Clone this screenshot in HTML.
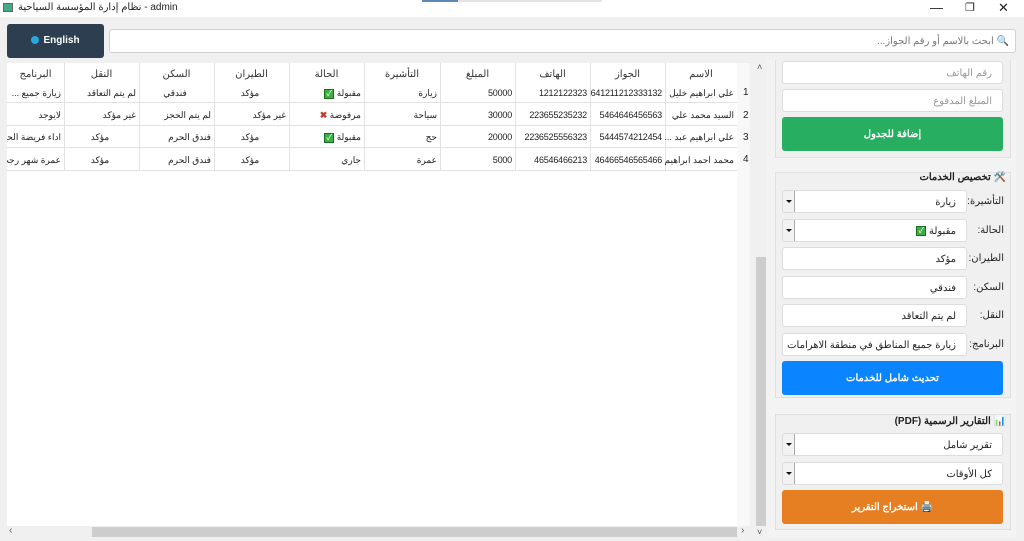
<!DOCTYPE html>
<html><head><meta charset="utf-8"><style>
*{box-sizing:border-box;margin:0;padding:0}
body{width:1024px;height:541px;overflow:hidden;background:#f0f0f0;font-family:"Liberation Sans","Noto Sans CJK SC",sans-serif;font-size:10px;color:#222;position:relative}
.a{position:absolute}
.c{position:absolute;white-space:nowrap;overflow:hidden;text-align:right;padding-right:3px;direction:rtl;font-size:9px;letter-spacing:-0.2px;line-height:24px}
.h{position:absolute;text-align:center;font-size:10px;color:#333;line-height:18px}
.inp{position:absolute;background:#fff;border:1px solid #dcdcdc;border-radius:3px;direction:rtl;padding-right:10px;font-size:10px;line-height:24px;overflow:hidden;white-space:nowrap}
.lbl{position:absolute;font-size:10px;direction:rtl;text-align:right}
.arrow{position:absolute;left:0;top:0;width:12px;height:100%;border-right:1px solid #aaa;background:#f2f2f2}
.arrow:after{content:"";position:absolute;left:3px;top:9px;border-left:3px solid transparent;border-right:3px solid transparent;border-top:3px solid #111}
.chk{display:inline-block;width:10px;height:10px;background:#3cb043;border:1px solid #1a6b20;color:#fff;font-size:8px;line-height:8px;text-align:center;vertical-align:middle;margin-left:3px;letter-spacing:0}
</style></head><body>
<div class="a" style="left:0;top:0;width:1024px;height:17px;background:#fff"></div>
<div class="a" style="left:3px;top:3px;width:10px;height:9px;border:1px solid #666;background:#4a8"></div>
<div class="a" style="left:18px;top:2px;font-size:10px;direction:ltr">نظام إدارة المؤسسة السياحية - admin</div>
<div class="a" style="left:422px;top:0;width:36px;height:2px;background:#5b8ab5"></div>
<div class="a" style="left:458px;top:0;width:144px;height:2px;background:#e4e4e4"></div>
<div class="a" style="left:930px;top:0;font-size:13px">—</div>
<div class="a" style="left:965px;top:1px;font-size:11px">❐</div>
<div class="a" style="left:998px;top:0;font-size:13px">✕</div>
<div class="a" style="left:7px;top:24px;width:97px;height:34px;background:#2c3e50;border-radius:3px;color:#fff;font-weight:bold;font-size:10px;line-height:34px;text-align:center"><span style="display:inline-block;width:8px;height:8px;border-radius:50%;background:#29a8e0;margin-right:4px;vertical-align:-1px"></span>English</div>
<div class="a" style="left:109px;top:29px;width:907px;height:24px;background:#fff;border:1px solid #d0d0d0;border-radius:3px;direction:rtl;padding-right:6px;line-height:24px;color:#777">🔍 ابحث بالاسم أو رقم الجواز...</div>

<div class="a" style="left:7px;top:63px;width:743px;height:463px;background:#fff"></div>
<div class="a" style="left:737px;top:63px;width:13px;height:463px;background:#f8f8f8"></div>
<div class="h" style="left:7px;top:66px;width:57px">البرنامج</div>
<div class="h" style="left:64px;top:66px;width:75px">النقل</div>
<div class="h" style="left:139px;top:66px;width:75px">السكن</div>
<div class="h" style="left:214px;top:66px;width:75px">الطيران</div>
<div class="h" style="left:289px;top:66px;width:75px">الحالة</div>
<div class="h" style="left:364px;top:66px;width:76px">التأشيرة</div>
<div class="h" style="left:440px;top:66px;width:75px">المبلغ</div>
<div class="h" style="left:515px;top:66px;width:75px">الهاتف</div>
<div class="h" style="left:590px;top:66px;width:75px">الجواز</div>
<div class="h" style="left:665px;top:66px;width:72px">الاسم</div>
<div class="a" style="left:64px;top:63px;width:1px;height:107px;background:#e2e2e2"></div>
<div class="a" style="left:139px;top:63px;width:1px;height:107px;background:#e2e2e2"></div>
<div class="a" style="left:214px;top:63px;width:1px;height:107px;background:#e2e2e2"></div>
<div class="a" style="left:289px;top:63px;width:1px;height:107px;background:#e2e2e2"></div>
<div class="a" style="left:364px;top:63px;width:1px;height:107px;background:#e2e2e2"></div>
<div class="a" style="left:440px;top:63px;width:1px;height:107px;background:#e2e2e2"></div>
<div class="a" style="left:515px;top:63px;width:1px;height:107px;background:#e2e2e2"></div>
<div class="a" style="left:590px;top:63px;width:1px;height:107px;background:#e2e2e2"></div>
<div class="a" style="left:665px;top:63px;width:1px;height:107px;background:#e2e2e2"></div>
<div class="a" style="left:7px;top:102px;width:730px;height:1px;background:#e2e2e2"></div>
<div class="a" style="left:7px;top:125px;width:730px;height:1px;background:#e2e2e2"></div>
<div class="a" style="left:7px;top:147px;width:730px;height:1px;background:#e2e2e2"></div>
<div class="a" style="left:7px;top:170px;width:730px;height:1px;background:#e2e2e2"></div>
<div class="a" style="left:743px;top:87px">1</div>
<div class="a" style="left:743px;top:110px">2</div>
<div class="a" style="left:743px;top:132px">3</div>
<div class="a" style="left:743px;top:154px">4</div>
<div class="c" style="left:7px;top:81px;width:57px">زيارة جميع ...</div>
<div class="c" style="left:64px;top:81px;width:75px">لم يتم التعاقد</div>
<div class="c" style="left:139px;top:81px;width:75px;text-align:center">فندقي</div>
<div class="c" style="left:214px;top:81px;width:75px;text-align:center">مؤكد</div>
<div class="c" style="left:289px;top:81px;width:75px">مقبولة <span class="chk">✓</span></div>
<div class="c" style="left:364px;top:81px;width:76px">زيارة</div>
<div class="c" style="left:440px;top:81px;width:75px">50000</div>
<div class="c" style="left:515px;top:81px;width:75px">1212122323</div>
<div class="c" style="left:590px;top:81px;width:75px">641211212333132</div>
<div class="c" style="left:665px;top:81px;width:72px">علي ابراهيم خليل</div>
<div class="c" style="left:7px;top:103px;width:57px">لايوجد</div>
<div class="c" style="left:64px;top:103px;width:75px">غير مؤكد</div>
<div class="c" style="left:139px;top:103px;width:75px">لم يتم الحجز</div>
<div class="c" style="left:214px;top:103px;width:75px">غير مؤكد</div>
<div class="c" style="left:289px;top:103px;width:75px">مرفوضة <span style="color:#c0392b;font-weight:bold">✖</span></div>
<div class="c" style="left:364px;top:103px;width:76px">سياحة</div>
<div class="c" style="left:440px;top:103px;width:75px">30000</div>
<div class="c" style="left:515px;top:103px;width:75px">223655235232</div>
<div class="c" style="left:590px;top:103px;width:75px">5464646456563</div>
<div class="c" style="left:665px;top:103px;width:72px">السيد محمد علي</div>
<div class="c" style="left:7px;top:125px;width:57px">اداء فريضة الحج</div>
<div class="c" style="left:64px;top:125px;width:75px;text-align:center">مؤكد</div>
<div class="c" style="left:139px;top:125px;width:75px">فندق الحرم</div>
<div class="c" style="left:214px;top:125px;width:75px;text-align:center">مؤكد</div>
<div class="c" style="left:289px;top:125px;width:75px">مقبولة <span class="chk">✓</span></div>
<div class="c" style="left:364px;top:125px;width:76px">حج</div>
<div class="c" style="left:440px;top:125px;width:75px">20000</div>
<div class="c" style="left:515px;top:125px;width:75px">2236525556323</div>
<div class="c" style="left:590px;top:125px;width:75px">5444574212454</div>
<div class="c" style="left:665px;top:125px;width:72px">علي ابراهيم عبد ...</div>
<div class="c" style="left:7px;top:148px;width:57px">عمرة شهر رجب</div>
<div class="c" style="left:64px;top:148px;width:75px;text-align:center">مؤكد</div>
<div class="c" style="left:139px;top:148px;width:75px">فندق الحرم</div>
<div class="c" style="left:214px;top:148px;width:75px;text-align:center">مؤكد</div>
<div class="c" style="left:289px;top:148px;width:75px">جاري</div>
<div class="c" style="left:364px;top:148px;width:76px">عمرة</div>
<div class="c" style="left:440px;top:148px;width:75px">5000</div>
<div class="c" style="left:515px;top:148px;width:75px">46546466213</div>
<div class="c" style="left:590px;top:148px;width:75px">46466546565466</div>
<div class="c" style="left:665px;top:148px;width:72px">محمد احمد ابراهيم</div>
<div class="a" style="left:7px;top:526px;width:743px;height:12px;background:#f0f0f0"></div>
<div class="a" style="left:92px;top:527px;width:645px;height:10px;background:#cdcdcd"></div>
<div class="a" style="left:9px;top:525px;font-size:10px;color:#555">‹</div>
<div class="a" style="left:741px;top:525px;font-size:10px;color:#555">›</div>
<div class="a" style="left:755px;top:63px;width:12px;height:475px;background:#f0f0f0"></div>
<div class="a" style="left:756px;top:257px;width:10px;height:269px;background:#cdcdcd"></div>
<div class="a" style="left:757px;top:62px;font-size:9px;color:#555">˄</div>
<div class="a" style="left:757px;top:527px;font-size:9px;color:#555">˅</div>
<div class="a" style="left:767px;top:60px;width:249px;height:478px;background:#f3f3f3"></div>
<div class="a" style="left:775px;top:60px;width:236px;height:98px;border:1px solid #e0e0e0;border-top:none;background:#f0f0f0"></div>
<div class="inp" style="left:782px;top:61px;width:221px;height:23px;color:#999">رقم الهاتف</div>
<div class="inp" style="left:782px;top:89px;width:221px;height:23px;color:#999">المبلغ المدفوع</div>
<div class="a" style="left:782px;top:117px;width:221px;height:34px;background:#27ae60;border-radius:3px;color:#fff;font-weight:bold;text-align:center;line-height:36px;direction:rtl">إضافة للجدول</div>
<div class="a" style="left:775px;top:172px;width:236px;height:226px;border:1px solid #e0e0e0;background:#f0f0f0"></div>
<div class="a" style="left:830px;top:172px;width:176px;text-align:right;font-weight:bold;direction:rtl;font-size:10px">🛠️ تخصيص الخدمات</div>
<div class="inp" style="left:782px;top:190px;width:185px;height:23px">زيارة<div class="arrow"></div></div>
<div class="inp" style="left:782px;top:219px;width:185px;height:23px">مقبولة <span class="chk">✓</span><div class="arrow"></div></div>
<div class="inp" style="left:782px;top:247px;width:185px;height:23px">مؤكد</div>
<div class="inp" style="left:782px;top:276px;width:185px;height:23px">فندقي</div>
<div class="inp" style="left:782px;top:304px;width:185px;height:23px">لم يتم التعاقد</div>
<div class="inp" style="left:782px;top:333px;width:185px;height:23px">زيارة جميع المناطق في منطقة الاهرامات</div>
<div class="lbl" style="left:966px;top:196px;width:38px">التأشيرة:</div>
<div class="lbl" style="left:966px;top:225px;width:38px">الحالة:</div>
<div class="lbl" style="left:966px;top:253px;width:38px">الطيران:</div>
<div class="lbl" style="left:966px;top:282px;width:38px">السكن:</div>
<div class="lbl" style="left:966px;top:310px;width:38px">النقل:</div>
<div class="lbl" style="left:966px;top:339px;width:38px">البرنامج:</div>
<div class="a" style="left:782px;top:361px;width:221px;height:34px;background:#0a84ff;border-radius:3px;color:#fff;font-weight:bold;text-align:center;line-height:36px;direction:rtl">تحديث شامل للخدمات</div>
<div class="a" style="left:775px;top:414px;width:236px;height:116px;border:1px solid #e0e0e0;background:#f0f0f0"></div>
<div class="a" style="left:830px;top:416px;width:176px;text-align:right;font-weight:bold;direction:rtl;font-size:10px">📊 التقارير الرسمية (PDF)</div>
<div class="inp" style="left:782px;top:433px;width:221px;height:23px">تقرير شامل<div class="arrow"></div></div>
<div class="inp" style="left:782px;top:462px;width:221px;height:23px">كل الأوقات<div class="arrow"></div></div>
<div class="a" style="left:782px;top:490px;width:221px;height:34px;background:#e67e22;border-radius:3px;color:#fff;font-weight:bold;text-align:center;line-height:36px;direction:rtl">🖨️ استخراج التقرير</div>
</body></html>
